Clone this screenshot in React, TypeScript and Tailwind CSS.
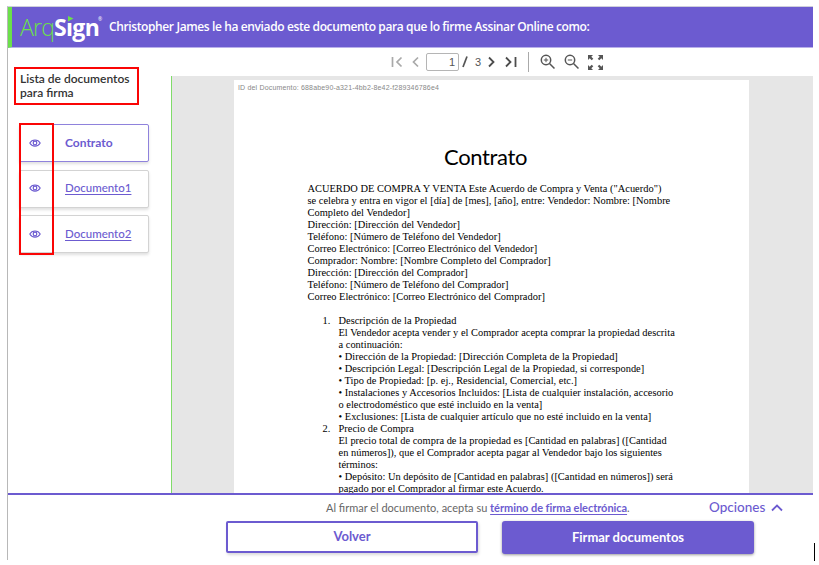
import React from "react";

const intro = [
  'ACUERDO DE COMPRA Y VENTA Este Acuerdo de Compra y Venta ("Acuerdo")',
  "se celebra y entra en vigor el [día] de [mes], [año], entre: Vendedor: Nombre: [Nombre",
  "Completo del Vendedor]",
  "Dirección: [Dirección del Vendedor]",
  "Teléfono: [Número de Teléfono del Vendedor]",
  "Correo Electrónico: [Correo Electrónico del Vendedor]",
  "Comprador: Nombre: [Nombre Completo del Comprador]",
  "Dirección: [Dirección del Comprador]",
  "Teléfono: [Número de Teléfono del Comprador]",
  "Correo Electrónico: [Correo Electrónico del Comprador]",
];

const clauses = [
  [
    "Descripción de la Propiedad",
    "El Vendedor acepta vender y el Comprador acepta comprar la propiedad descrita",
    "a continuación:",
    "• Dirección de la Propiedad: [Dirección Completa de la Propiedad]",
    "• Descripción Legal: [Descripción Legal de la Propiedad, si corresponde]",
    "• Tipo de Propiedad: [p. ej., Residencial, Comercial, etc.]",
    "• Instalaciones y Accesorios Incluidos: [Lista de cualquier instalación, accesorio",
    "o electrodoméstico que esté incluido en la venta]",
    "• Exclusiones: [Lista de cualquier artículo que no esté incluido en la venta]",
  ],
  [
    "Precio de Compra",
    "El precio total de compra de la propiedad es [Cantidad en palabras] ([Cantidad",
    "en números]), que el Comprador acepta pagar al Vendedor bajo los siguientes",
    "términos:",
    "• Depósito: Un depósito de [Cantidad en palabras] ([Cantidad en números]) será",
    "pagado por el Comprador al firmar este Acuerdo.",
  ],
];

function Eye() {
  return (
    <svg width="12" height="10" viewBox="0 0 12 10" fill="none" stroke="#6c5bd0" className="shrink-0">
      <path d="M.8 5C3 .9 9 .9 11.200 5 9 9.100 3 9.100 .8 5Z" strokeWidth="1.100" />
      <circle cx="6" cy="5" r="1.800" strokeWidth="1.200" />
    </svg>
  );
}

function DocItem({ name, active }: { name: string; active?: boolean }) {
  return (
    <div
      className={
        "flex h-[38px] w-[130px] items-center rounded-[2px] border bg-white pb-px pl-[9px] shadow-[0_2px_3px_rgba(0,0,0,0.12)] " +
        (active ? "border-[#8f82dc] text-[12px] font-bold" : "border-[#d3d3d3] text-[11.5px] font-medium")
      }
    >
      <Eye />
      <span
        className={
          "ml-[24px] text-[#6c5bd0] " +
          (active ? "" : "underline underline-offset-2")
        }
      >
        {name}
      </span>
    </div>
  );
}

function Logo() {
  return (
    <div className="relative flex h-[40px] w-[83px] items-center pl-[8px] font-['Open_Sans'] text-[23px] leading-none whitespace-nowrap">
      <span className="font-light tracking-[-0.8px] text-[#6be04a]">Arq</span>
      <span className="font-bold tracking-[-0.7px] text-white">Sıgn</span>
      <svg className="absolute left-[56px] top-[9px]" width="6" height="6" viewBox="0 0 6 6">
        <path d="M0 0L5.500 2.500L0 5.500Z" fill="#6be04a" />
      </svg>
      <span className="absolute left-[86px] top-[10px] text-[5px] text-white">®</span>
    </div>
  );
}

function Toolbar() {
  return (
    <div className="flex h-[28px] shrink-0 items-center pl-[383px] text-[#555]">
      <svg width="36" height="28" viewBox="0 0 36 28" fill="none" stroke="#a9a9a9" strokeWidth="1.700">
        <path d="M1.500 9V19M10.500 9.500L6 14L10.500 18.500M27 9.500L22.500 14L27 18.500" />
      </svg>
      <div className="-ml-px flex h-[18px] w-[33px] items-center justify-end rounded-[2px] border border-[#b5b5b5] pr-[3px] text-[11px] font-['Liberation_Sans']">
        1
      </div>
      <svg width="8" height="28" viewBox="0 0 8 28" className="ml-[2px]">
        <path d="M2 19L6 8.500" stroke="#555" strokeWidth="1.700" />
      </svg>
      <span className="ml-[6px] w-[7px] text-[11px] font-['Liberation_Sans']">3</span>
      <svg width="34" height="28" viewBox="0 0 34 28" fill="none" stroke="#4c4c4c" strokeWidth="1.800" className="ml-[5px]">
        <path d="M2 9.500L6.500 14L2 18.500M19 9.500L23.500 14L19 18.500M28.500 9V19" />
      </svg>
      <div className="ml-[7px] h-[20px] w-px bg-[#aaa]" />
      <svg width="70" height="28" viewBox="0 0 70 28" fill="none" stroke="#555" strokeWidth="1.500" className="ml-[10px]">
        <circle cx="7" cy="12" r="4.700" />
        <path d="M10.500 15.500L15.500 20.500" />
        <path d="M4.800 12H9.200M7 9.800V14.200" strokeWidth="1" />
        <circle cx="31" cy="12" r="4.700" />
        <path d="M34.500 15.500L39.500 20.500" />
        <path d="M28.800 12H33.200" strokeWidth="1" />
        <path
          d="M49 7h5l-1.700 1.700 2 2-1.600 1.600-2-2L49 12zM64 7v5l-1.700-1.700-2 2-1.600-1.600 2-2L59 7zM49 22v-5l1.700 1.700 2-2 1.600 1.600-2 2L54 22zM64 22h-5l1.700-1.700-2-2 1.600-1.600 2 2L64 17z"
          fill="#555"
          stroke="none"
        />
      </svg>
    </div>
  );
}

function ContractPage() {
  return (
    <div className="h-full w-[515px] shrink-0 overflow-hidden bg-white">
      <div className="h-[65px] pl-[4px] pt-[2px] font-['Liberation_Sans'] text-[7px] leading-[12px] tracking-[0.170px] text-[#888] whitespace-nowrap">
        ID del Documento: 688abe90-a321-4bb2-8e42-f289346786e4
      </div>
      <div className="pl-[210px] font-['Lato'] text-[22px] leading-[24px] tracking-[-0.350px] text-black">Contrato</div>
      <div className="pl-[73.5px] pt-[14px] font-['Liberation_Serif'] text-[10.4px] leading-[12px] tracking-[0.020px] text-black whitespace-nowrap">
        {intro.map((line) => (
          <div key={line}>{line}</div>
        ))}
        <ol className="pt-[12px]">
          {clauses.map((clause, i) => (
            <li key={clause[0]} className="flex pl-[15px]">
              <span className="w-[16px] shrink-0">{i + 1}.</span>
              <div>
                {clause.map((line) => (
                  <div key={line}>{line}</div>
                ))}
              </div>
            </li>
          ))}
        </ol>
      </div>
    </div>
  );
}

export default function App() {
  return (
    <div className="relative h-[565px] w-[819px] overflow-hidden bg-white pl-[7px] pt-[6px] font-['Lato',sans-serif]">
      <div className="flex h-[554px] w-[806px] flex-col border-l border-t border-l-[#b8b8b8] border-t-[#cfcfdc]">
        <header className="flex h-[41px] shrink-0 items-center border-b border-l-4 border-b-[#b9b0ea] border-l-[#6be04a] bg-[#6c5bd0]">
          <Logo />
          <span className="ml-[14px] font-['Open_Sans'] text-[12px] font-semibold tracking-[-0.380px] text-white whitespace-nowrap">
            Christopher James le ha enviado este documento para que lo firme Assinar Online como:
          </span>
        </header>
        <Toolbar />
        <div className="flex h-[417px] shrink-0">
          <aside className="w-[163px] shrink-0">
            <div className="-mt-[9px] ml-[6px] flex h-[38px] w-[125px] items-end border-2 border-[#fa0505] pb-[3px] pl-[4px] text-[12px] font-semibold leading-[14px] text-[#333]">
              <div className="whitespace-nowrap">
                Lista de documentos
                <br />
                para firma
              </div>
            </div>
            <div className="relative ml-[11px] mt-[19px] flex flex-col gap-[7.5px]">
              <DocItem name="Contrato" active />
              <DocItem name="Documento1" />
              <DocItem name="Documento2" />
              <div className="absolute left-0 -top-px h-[132px] w-[35px] border-2 border-[#fa0505]" />
            </div>
          </aside>
          <main className="flex flex-1 border-l border-l-[#80dc6a] bg-[#e6e6e6] pl-[62px] pt-[4px]">
            <ContractPage />
          </main>
        </div>
        <footer className="flex flex-1 flex-col border-t-2 border-[#6c5bd0] bg-white">
          <div className="flex h-[26px] items-center pl-[318px] text-[11px] text-[#666] whitespace-nowrap">
            <span className="w-[382px]">
              Al firmar el documento, acepta su{" "}
              <a className="font-bold text-[#6c5bd0] tracking-[-0.05px] underline underline-offset-2">término de firma electrónica</a>.
            </span>
            <span className="ml-px pb-px text-[13.5px] font-medium text-[#6c5bd0]">Opciones</span>
            <svg width="12" height="8" viewBox="0 0 12 8" className="ml-[6px]" fill="none" stroke="#6c5bd0" strokeWidth="1.800">
              <path d="M1 6.500L6 1.500L11 6.500" />
            </svg>
          </div>
          <div className="flex gap-[24px] pl-[218px] text-[13px] font-bold text-[#6c5bd0]">
            <button className="h-[32px] w-[252px] rounded-[2px] border-2 border-[#6c5bd0] bg-white shadow-[1px_2px_3px_rgba(0,0,0,0.15)]">
              Volver
            </button>
            <button className="h-[33px] w-[252px] rounded-[3px] bg-[#6c5bd0] text-white shadow-[0_1px_3px_rgba(0,0,0,0.4)]">
              Firmar documentos
            </button>
          </div>
        </footer>
      </div>
      <div className="absolute left-[814px] top-[543px] h-[18px] w-px bg-black" />
    </div>
  );
}
